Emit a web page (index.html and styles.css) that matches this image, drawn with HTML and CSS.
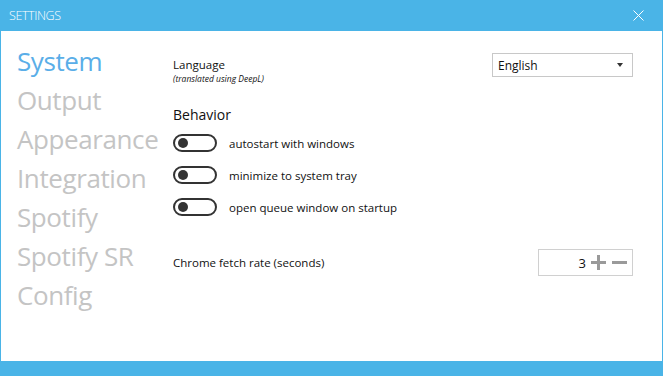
FILE: index.html
```html
<!DOCTYPE html>
<html lang="en">
<head>
    <meta charset="UTF-8">
    <title>Settings</title>
    <link rel="stylesheet" href="styles.css">
</head>
<body>
    <div class="window">
        <header class="title-bar">
            <div class="title">SETTINGS</div>
            <button class="close-btn">
                <svg width="11" height="11" viewBox="0 0 11 11">
                    <path d="M0.5 0.5 L10.5 10.5 M10.5 0.5 L0.5 10.5" stroke="#fff" stroke-width="1" fill="none"/>
                </svg>
            </button>
        </header>

        <div class="main">
            <nav class="nav">
                <div class="nav-item active">System</div>
                <div class="nav-item">Output</div>
                <div class="nav-item">Appearance</div>
                <div class="nav-item">Integration</div>
                <div class="nav-item">Spotify</div>
                <div class="nav-item">Spotify SR</div>
                <div class="nav-item">Config</div>
            </nav>

            <section class="panel">
                <div class="row language-row">
                    <div class="label-block">
                        <div class="label">Language</div>
                        <div class="sub-label">(translated using DeepL)</div>
                    </div>
                    <div class="dropdown">
                        <span>English</span>
                        <span class="arrow"></span>
                    </div>
                </div>

                <div class="group-title">Behavior</div>

                <div class="toggle-row">
                    <span class="toggle"><span class="knob"></span></span>
                    <span class="toggle-label">autostart with windows</span>
                </div>
                <div class="toggle-row">
                    <span class="toggle"><span class="knob"></span></span>
                    <span class="toggle-label">minimize to system tray</span>
                </div>
                <div class="toggle-row">
                    <span class="toggle"><span class="knob"></span></span>
                    <span class="toggle-label">open queue window on startup</span>
                </div>

                <div class="row fetch-row">
                    <div class="label">Chrome fetch rate (seconds)</div>
                    <div class="spinner">
                        <span class="value">3</span>
                        <svg width="15" height="15" viewBox="0 0 15 15">
                            <path d="M7.5 0 V15 M0 7.5 H15" stroke="#9a9a9a" stroke-width="3" fill="none"/>
                        </svg>
                        <svg width="15" height="15" viewBox="0 0 15 15">
                            <path d="M0 7.5 H15" stroke="#9a9a9a" stroke-width="3" fill="none"/>
                        </svg>
                    </div>
                </div>
            </section>
        </div>

        <footer class="status-bar"></footer>
    </div>
</body>
</html>
```

FILE: styles.css
```css
* {
    box-sizing: border-box;
    margin: 0;
    padding: 0;
    font-family: 'Open Sans', 'Noto Sans', sans-serif;
}

body {
    background-color: #fff;
}

.window {
    width: 663px;
    height: 376px;
    display: flex;
    flex-direction: column;
}

.title-bar {
    height: 31px;
    background-color: #4ab4e7;
    display: flex;
    justify-content: space-between;
    align-items: center;
    padding: 0 19px 0 9px;
}

.title {
    color: #fff;
    font-size: 12.5px;
    font-weight: 300;
    letter-spacing: -0.4px;
}

.close-btn {
    background: transparent;
    border: none;
    width: 11px;
    height: 11px;
    display: flex;
}

.main {
    flex: 1;
    display: flex;
    border-left: 1px solid #4ab4e7;
    border-right: 1px solid #4ab4e7;
}

.nav {
    width: 172px;
    padding: 11px 0 0 16px;
}

.nav-item {
    font-size: 26px;
    line-height: 39px;
    color: #c4c4c4;
    letter-spacing: -0.4px;
}

.nav-item.active {
    color: #5aaee8;
}

.panel {
    flex: 1;
    padding: 22px 29px 0 0;
    display: flex;
    flex-direction: column;
}

.row {
    display: flex;
    justify-content: space-between;
}

.label {
    font-size: 11.5px;
    line-height: 16px;
    color: #111;
}

.label-block {
    margin-top: 4px;
}

.sub-label {
    font-size: 8.5px;
    line-height: 11px;
    font-style: italic;
    color: #111;
}

.dropdown {
    width: 141px;
    height: 24px;
    border: 1px solid #c8c8c8;
    display: flex;
    justify-content: space-between;
    align-items: center;
    padding: 0 9px 0 5px;
    font-size: 12px;
    color: #111;
}

.arrow {
    width: 0;
    height: 0;
    border-left: 3.5px solid transparent;
    border-right: 3.5px solid transparent;
    border-top: 4px solid #333;
}

.group-title {
    margin-top: 23px;
    font-size: 14px;
    line-height: 16px;
    color: #111;
    margin-bottom: 4px;
}

.toggle-row {
    height: 32px;
    display: flex;
    align-items: center;
}

.toggle {
    width: 44px;
    height: 18px;
    border: 2px solid #333;
    border-radius: 9px;
    display: flex;
    align-items: center;
    padding-left: 3px;
    margin-right: 12px;
}

.knob {
    width: 10px;
    height: 10px;
    border-radius: 50%;
    background-color: #333;
}

.toggle-label {
    font-size: 11.5px;
    color: #111;
}

.fetch-row {
    margin-top: 26px;
    align-items: center;
}

.spinner {
    width: 95px;
    height: 27px;
    border: 1px solid #d0d0d0;
    display: flex;
    justify-content: flex-end;
    align-items: center;
    gap: 6px;
    padding-right: 5px;
}

.value {
    font-size: 13px;
    color: #111;
    margin-right: -1px;
}

.status-bar {
    height: 15px;
    background-color: #4ab4e7;
}
```
